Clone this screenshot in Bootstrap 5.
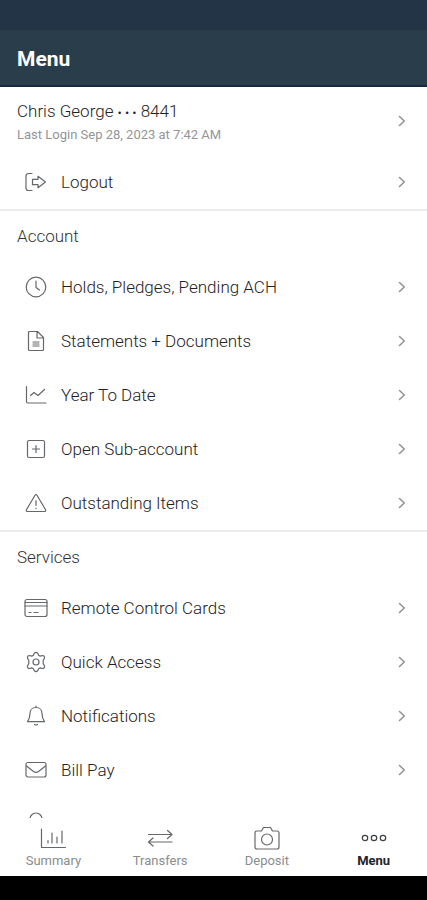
<!DOCTYPE html>
<html lang="en">
<head>
<meta charset="utf-8">
<meta name="viewport" content="width=device-width, initial-scale=1">
<title>Menu</title>
<link href="https://cdn.jsdelivr.net/npm/bootstrap@5.3.0/dist/css/bootstrap.min.css" rel="stylesheet">
<style>
  body { font-family: Roboto, "Liberation Sans", sans-serif; font-size: 17px; font-weight: 300; line-height: 20px; color: #1f2225; }
  svg { fill: none; stroke: #64686b; stroke-width: 1.2; stroke-linecap: round; stroke-linejoin: round; flex: none; }
  .status-strip { height: 30px; background: #233447; }
  .title-bar { height: 57px; padding: 3px 17px 0; background: #2a3d4a; border-bottom: 2px solid #14283f; }
  .title-bar h1 { font-size: 21px; line-height: 24px; font-weight: 700; }
  .menu-pane { min-height: 0; }
  .menu-row { height: 54px; padding: 0 21px 0 24px; color: inherit; flex: none; }
  .profile-row { height: 68px; padding-left: 17px; }
  .profile-text { padding-top: 4px; }
  .mask-dots { font-size: 13px; }
  .profile-login { font-size: 13px; font-weight: 400; color: #939597; padding-top: 2px; }
  .section-title { height: 51px; padding: 0 17px; font-size: 17px; line-height: 20px; font-weight: 300; color: #303336; border-top: 2px solid #ececec; flex: none; }
  .row-icon { margin-right: 13px; }
  .chev { stroke: #939393; stroke-width: 1.6; }
  .tab-bar { height: 58px; }
  .tab-item { font-size: 13px; font-weight: 400; line-height: 20px; color: #8a8c8e; padding-top: 7px; }
  .tab-item.active { color: #22252b; font-weight: 700; }
  .tab-item.active svg { stroke: #3c4045; }
  .system-bar { height: 24px; }
</style>
</head>
<body class="vh-100 d-flex flex-column overflow-hidden bg-white">
<svg class="d-none">
  <symbol id="chevron" viewBox="0 0 8 12"><path d="M1.5 1.5 6.3 6 1.5 10.5"/></symbol>
</svg>
<div class="status-strip flex-shrink-0"></div>
<header class="title-bar d-flex align-items-center flex-shrink-0 text-white"><h1 class="m-0">Menu</h1></header>

<main class="menu-pane flex-grow-1 d-flex flex-column overflow-hidden">
  <a href="#" class="menu-row profile-row d-flex align-items-center text-decoration-none">
    <span class="profile-text flex-grow-1 d-flex flex-column"><span>Chris George <span class="mask-dots">• • •</span> 8441</span><span class="profile-login">Last Login Sep 28, 2023 at 7:42 AM</span></span>
    <svg class="chev" width="8" height="12"><use href="#chevron"/></svg>
  </a>
  <a href="#" class="menu-row d-flex align-items-center text-decoration-none">
    <svg class="row-icon" width="24" height="24" viewBox="0 0 24 24"><path d="M8 3.500H4.500Q2 3.500 2 6V18Q2 20.500 4.500 20.500H8M8.500 9.300H14V6.300L21.500 12 14 17.700V14.700H8.500Z"/></svg>
    <span class="flex-grow-1">Logout</span>
    <svg class="chev" width="8" height="12"><use href="#chevron"/></svg>
  </a>

  <h2 class="section-title d-flex align-items-center m-0">Account</h2>
  <a href="#" class="menu-row d-flex align-items-center text-decoration-none">
    <svg class="row-icon" width="24" height="24" viewBox="0 0 24 24"><circle cx="12" cy="12" r="9.800"/><path d="M12 6V12.500L15.500 15"/></svg>
    <span class="flex-grow-1">Holds, Pledges, Pending ACH</span>
    <svg class="chev" width="8" height="12"><use href="#chevron"/></svg>
  </a>
  <a href="#" class="menu-row d-flex align-items-center text-decoration-none">
    <svg class="row-icon" width="24" height="24" viewBox="0 0 24 24"><path d="M4.500 3.500Q4.500 2.500 5.500 2.500H13.500L19.500 8.500V20.500Q19.500 21.500 18.500 21.500H5.500Q4.500 21.500 4.500 20.500ZM13 2.500V9H19.500M9 13H15M9 15H15M9 17H15"/></svg>
    <span class="flex-grow-1">Statements + Documents</span>
    <svg class="chev" width="8" height="12"><use href="#chevron"/></svg>
  </a>
  <a href="#" class="menu-row d-flex align-items-center text-decoration-none">
    <svg class="row-icon" width="24" height="24" viewBox="0 0 24 24"><path d="M2.500 3.500V18.500Q2.500 20 4 20H22M6.500 12.500 10 9.500 14 12.500 20.500 6.500"/></svg>
    <span class="flex-grow-1">Year To Date</span>
    <svg class="chev" width="8" height="12"><use href="#chevron"/></svg>
  </a>
  <a href="#" class="menu-row d-flex align-items-center text-decoration-none">
    <svg class="row-icon" width="24" height="24" viewBox="0 0 24 24"><rect x="3.500" y="3.500" width="17" height="17" rx="1.500"/><path d="M12 8.500V15.500M8.500 12H15.500"/></svg>
    <span class="flex-grow-1">Open Sub-account</span>
    <svg class="chev" width="8" height="12"><use href="#chevron"/></svg>
  </a>
  <a href="#" class="menu-row d-flex align-items-center text-decoration-none">
    <svg class="row-icon" width="24" height="24" viewBox="0 0 24 24"><path d="M12 3.500Q12.600 3.500 13 4.200L21.700 19Q22 20.500 20.500 20.500H3.500Q2 20.500 2.300 19L11 4.200Q11.400 3.500 12 3.500ZM12 9.500V14.500M12 17V17.400"/></svg>
    <span class="flex-grow-1">Outstanding Items</span>
    <svg class="chev" width="8" height="12"><use href="#chevron"/></svg>
  </a>

  <h2 class="section-title d-flex align-items-center m-0">Services</h2>
  <a href="#" class="menu-row d-flex align-items-center text-decoration-none">
    <svg class="row-icon" width="24" height="24" viewBox="0 0 24 24"><rect x="1" y="3.500" width="22" height="17" rx="2"/><path d="M1 6.500H23M1 10H23M5 16.500H7M10 16.500H14"/></svg>
    <span class="flex-grow-1">Remote Control Cards</span>
    <svg class="chev" width="8" height="12"><use href="#chevron"/></svg>
  </a>
  <a href="#" class="menu-row d-flex align-items-center text-decoration-none">
    <svg class="row-icon" width="24" height="24" viewBox="0 0 24 24"><circle cx="12" cy="12" r="3"/><path d="M10.300 3.300Q12 1.300 13.700 3.300L14.600 5.300 16.200 6.100 18.400 5.500Q20.800 5.600 20.500 8.200L19.200 10.300V13.700L20.500 15.800Q20.800 18.400 18.400 18.500L16.200 17.900 14.600 18.700 13.700 20.700Q12 22.700 10.300 20.700L9.400 18.700 7.800 17.900 5.600 18.500Q3.200 18.400 3.500 15.800L4.800 13.700V10.300L3.500 8.200Q3.200 5.600 5.600 5.500L7.800 6.100 9.400 5.300Z"/></svg>
    <span class="flex-grow-1">Quick Access</span>
    <svg class="chev" width="8" height="12"><use href="#chevron"/></svg>
  </a>
  <a href="#" class="menu-row d-flex align-items-center text-decoration-none">
    <svg class="row-icon" width="24" height="24" viewBox="0 0 24 24"><path d="M12 2V3.500M12 3.500C8 3.500 6 6.300 6 9.500C6 14 5 15.500 3.500 17.700H20.500C19 15.500 18 14 18 9.500C18 6.300 16 3.500 12 3.500ZM10.500 20.500Q12 21.500 13.500 20.500"/></svg>
    <span class="flex-grow-1">Notifications</span>
    <svg class="chev" width="8" height="12"><use href="#chevron"/></svg>
  </a>
  <a href="#" class="menu-row d-flex align-items-center text-decoration-none">
    <svg class="row-icon" width="24" height="24" viewBox="0 0 24 24"><rect x="2" y="4.500" width="20" height="14.500" rx="2"/><path d="M2.500 8 9.500 13.500Q12 15.300 14.500 13.500L21.500 8"/></svg>
    <span class="flex-grow-1">Bill Pay</span>
    <svg class="chev" width="8" height="12"><use href="#chevron"/></svg>
  </a>
  <a href="#" class="menu-row d-flex align-items-center text-decoration-none" aria-label="Profile">
    <svg class="row-icon" width="24" height="24" viewBox="0 0 24 24"><circle cx="12" cy="7" r="6"/><path d="M3 22Q4 15 12 15T21 22"/></svg>
  </a>
</main>

<nav class="tab-bar d-flex flex-shrink-0 bg-white">
  <a href="#" class="tab-item flex-fill w-25 d-flex flex-column align-items-center text-decoration-none">
    <svg width="28" height="26" viewBox="0 0 28 26"><path d="M2.500 4V22.500H26.500M9 15.500V18M13 8V18M18 12V18M23 6V18"/></svg>
    <span>Summary</span>
  </a>
  <a href="#" class="tab-item flex-fill w-25 d-flex flex-column align-items-center text-decoration-none">
    <svg width="28" height="26" viewBox="0 0 28 26"><path d="M2.500 9.500H26M21.500 5.500 26 9.500 21.500 13.500M26 17H2.500M7 13 2.500 17 7 21"/></svg>
    <span>Transfers</span>
  </a>
  <a href="#" class="tab-item flex-fill w-25 d-flex flex-column align-items-center text-decoration-none">
    <svg width="28" height="26" viewBox="0 0 28 26"><path d="M4 6H8.500L10.500 2.500H17.500L19.500 6H24Q26 6 26 8V22Q26 24 24 24H4Q2 24 2 22V8Q2 6 4 6Z"/><circle cx="14" cy="14.500" r="5.500"/></svg>
    <span>Deposit</span>
  </a>
  <a href="#" class="tab-item active flex-fill w-25 d-flex flex-column align-items-center text-decoration-none" aria-current="page">
    <svg width="28" height="26" viewBox="0 0 28 26"><circle cx="5" cy="13" r="2.700"/><circle cx="14" cy="13" r="2.700"/><circle cx="23" cy="13" r="2.700"/></svg>
    <span>Menu</span>
  </a>
</nav>
<div class="system-bar flex-shrink-0 bg-black"></div>
<script src="https://cdn.jsdelivr.net/npm/bootstrap@5.3.0/dist/js/bootstrap.bundle.min.js"></script>
</body>
</html>
